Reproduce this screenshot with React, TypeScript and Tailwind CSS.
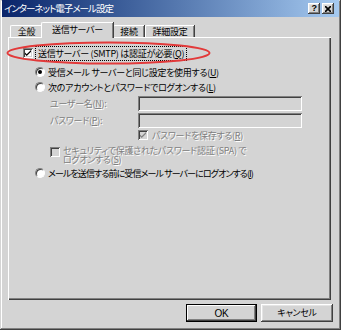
const jp = "font-['Noto_Sans_CJK_JP','Noto_Sans',sans-serif] [font-feature-settings:'palt']";
const raised =
  'shadow-[inset_-1px_-1px_#404040,inset_1px_1px_#ffffff,inset_-2px_-2px_#808080,inset_2px_2px_#e4e4e4]';
const sunken =
  'shadow-[inset_1px_1px_#808080,inset_-1px_-1px_#ffffff,inset_2px_2px_#404040,inset_-2px_-2px_#d4d4d4]';
const disabledText = 'text-[#808080] [text-shadow:1px_1px_0_#ffffff]';
const tab =
  'h-[12px] flex items-center justify-center border-t border-l border-white shadow-[inset_-1px_0_#808080,1px_0_#404040] rounded-tl-[2px]';

function Check({ checked, disabled }: { checked: boolean; disabled?: boolean }) {
  return (
    <span
      className={`w-[10px] h-[10px] shrink-0 flex items-center justify-center ${sunken} ${
        disabled ? 'bg-[#d4d4d4]' : 'bg-white'
      }`}
    >
      {checked && (
        <svg width="6" height="6" viewBox="0 0 7 7">
          <path d="M0 3 L2 5 L7 0 L7 2 L2 7 L0 5 Z" fill={disabled ? '#808080' : '#000'} />
        </svg>
      )}
    </span>
  );
}

function Radio({ checked }: { checked: boolean }) {
  return (
    <span className="w-[10px] h-[10px] shrink-0 rounded-full bg-white border border-t-[#808080] border-l-[#808080] border-b-white border-r-white flex items-center justify-center shadow-[inset_1px_1px_#404040]">
      {checked && <span className="w-[4px] h-[4px] rounded-full bg-black" />}
    </span>
  );
}

function Key({ k }: { k: string }) {
  return (
    <>
      (<span className="underline underline-offset-1">{k}</span>)
    </>
  );
}

function Field() {
  return <span className={`w-[164px] h-[15px] bg-[#d4d4d4] ${sunken}`} />;
}

export default function App() {
  return (
    <div className={`relative w-[341px] h-[330px] bg-[#d4d4d4] flex flex-col text-[9px] tracking-[-0.3px] text-black ${jp} shadow-[inset_-1px_-1px_#404040,inset_1px_1px_#d4d4d4,inset_-2px_-2px_#808080,inset_2px_2px_#ffffff]`}>
      {/* title bar */}
      <div className="mx-[2px] h-[17px] flex items-center pl-[2px] pr-[5px] bg-linear-to-r from-[#0a246a] to-[#a6caf0]">
        <span className="text-white text-[9.5px] tracking-[-1px] leading-none">インターネット電子メール設定</span>
        <div className="ml-auto flex gap-[2px]">
          <span className={`w-[12px] h-[11px] bg-[#d4d4d4] flex items-center justify-center text-[9px] font-bold leading-none font-['Liberation_Sans',sans-serif] ${raised}`}>?</span>
          <span className={`w-[12px] h-[11px] bg-[#d4d4d4] flex items-center justify-center ${raised}`}>
            <svg width="6" height="6" viewBox="0 0 6 6">
              <path d="M0 0 L6 6 M6 0 L0 6" stroke="#000" strokeWidth="1.6" />
            </svg>
          </span>
        </div>
      </div>

      <div className="pl-[8px] pr-[10px] pt-[5px] flex flex-col">
        {/* tabs */}
        <div className="flex items-end h-[15px] pl-[2px] relative z-10">
          <span className={`${tab} w-[32px]`}>全般</span>
          <span className="h-[16px] w-[72px] -mx-[1px] flex items-center justify-center bg-[#d4d4d4] border-t border-l border-white shadow-[inset_-1px_0_#808080,1px_0_#404040] rounded-tl-[2px] -mb-[1px] relative z-10 pb-[1px]">
            送信サーバー
          </span>
          <span className={`${tab} w-[31px] ml-[1px]`}>接続</span>
          <span className={`${tab} w-[49px] ml-[1px]`}>詳細設定</span>
        </div>

        {/* panel */}
        <div className="h-[263px] flex flex-col leading-none shadow-[inset_1px_1px_#ffffff,inset_-1px_-1px_#404040,inset_-2px_-2px_#808080]">
          <div className="mt-[9px] h-[14px] pl-[15px] flex items-center gap-[2px]">
            <Check checked />
            <span className="outline-1 outline-dotted outline-black px-[2px] py-[2px] ml-[1px]">
              送信サーバー (SMTP) は認証が必要<Key k="Q" />
            </span>
          </div>
          <div className="mt-[5px] h-[14px] pl-[27px] flex items-center gap-[3px]">
            <Radio checked />
            <span>
              受信メール サーバーと同じ設定を使用する<Key k="U" />
            </span>
          </div>
          <div className="mt-[1px] h-[14px] pl-[27px] flex items-center gap-[3px]">
            <Radio checked={false} />
            <span>
              次のアカウントとパスワードでログオンする<Key k="L" />
            </span>
          </div>
          <div className="mt-[2px] h-[15px] pl-[42px] flex items-center">
            <span className={`w-[88px] ${disabledText}`}>
              ユーザー名<Key k="N" />:
            </span>
            <Field />
          </div>
          <div className="mt-[2px] h-[15px] pl-[42px] flex items-center">
            <span className={`w-[88px] ${disabledText}`}>
              パスワード<Key k="P" />:
            </span>
            <Field />
          </div>
          <div className="mt-[1px] h-[12px] pl-[130px] flex items-center gap-[4px]">
            <Check checked disabled />
            <span className={disabledText}>
              パスワードを保存する<Key k="R" />
            </span>
          </div>
          <div className="mt-[5px] pl-[42px] flex items-start gap-[3px]">
            <span className="mt-[1px]">
              <Check checked={false} disabled />
            </span>
            <span className={`flex flex-col leading-[9px] ${disabledText}`}>
              <span>セキュリティで保護されたパスワード認証 (SPA) で</span>
              <span>
                ログオンする<Key k="S" />
              </span>
            </span>
          </div>
          <div className="mt-[2px] h-[14px] pl-[27px] flex items-center gap-[3px]">
            <Radio checked={false} />
            <span className="tracking-[-0.9px]">
              メールを送信する前に受信メール サーバーにログオンする<Key k="I" />
            </span>
          </div>
        </div>

        {/* buttons */}
        <div className="mt-[4px] -mr-[2px] flex justify-end gap-[4px]">
          <span className="w-[71px] h-[18px] flex items-center justify-center bg-[#d4d4d4] font-['Liberation_Sans',sans-serif] text-[10px] shadow-[inset_0_0_0_1px_#000000,inset_-2px_-2px_#404040,inset_2px_2px_#ffffff,inset_-3px_-3px_#808080]">
            OK
          </span>
          <span className={`w-[72px] h-[18px] flex items-center justify-center bg-[#d4d4d4] ${raised}`}>キャンセル</span>
        </div>
      </div>

      {/* red highlight ellipse */}
      <svg className="absolute left-[6px] top-[41px]" width="205" height="24" viewBox="0 0 205 24">
        <ellipse cx="102.5" cy="12" rx="101" ry="10.5" fill="none" stroke="#e23a3a" strokeWidth="2" />
      </svg>
    </div>
  );
}
